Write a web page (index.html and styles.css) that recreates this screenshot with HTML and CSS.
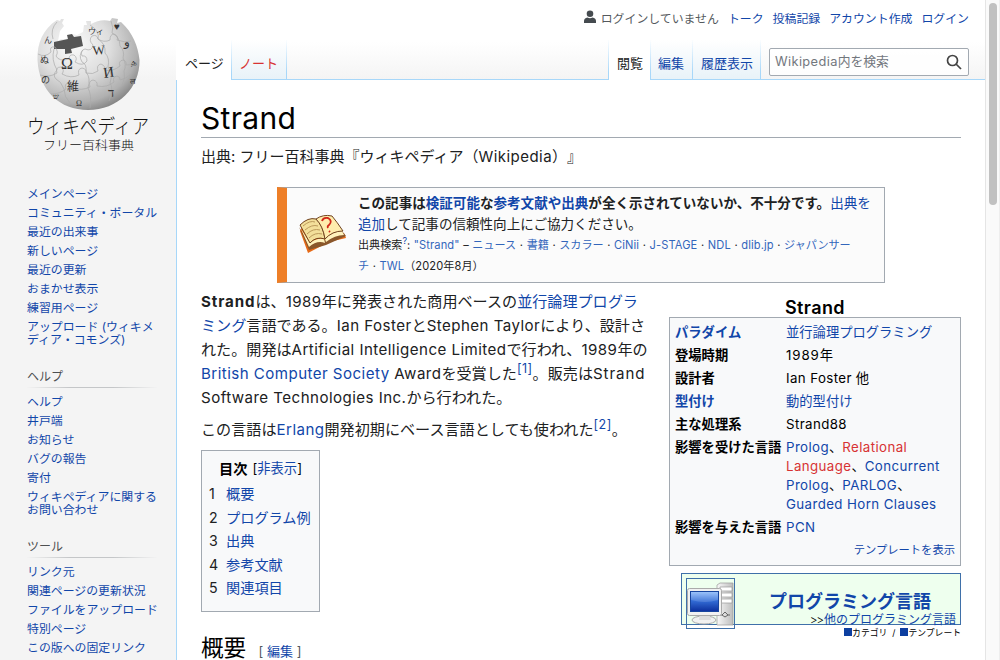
FILE: index.html
```html
<!DOCTYPE html>
<html lang="ja">
<head>
<meta charset="utf-8">
<title>Strand - Wikipedia</title>
<link rel="stylesheet" href="styles.css">
</head>
<body>
<div class="page">
  <aside class="sidebar">
    <svg class="logo" width="176" height="160" viewBox="0 0 176 160">
      <defs>
        <radialGradient id="ball" cx="0.36" cy="0.3" r="0.78">
          <stop offset="0" stop-color="#fafafa"/><stop offset="0.45" stop-color="#dedede"/>
          <stop offset="0.8" stop-color="#b0b0b0"/><stop offset="1" stop-color="#777"/>
        </radialGradient>
      </defs>
      <path fill="url(#ball)" d="M64 19 L61 19 60 21 57 20 C43 29 37 43 37.500 60 C39 91 60 110 88 110 C118 110 140 88 139.500 60 C138 46 133 33 121 22 L117 23 118 19 112 18 110 21 C103 19 97 21 91 24 L91 21 86 21 87 25 84 25 83 32 77 35 72 34 66 39 61 39 58 41 60 31 64 26 62 23Z"/>
      <path fill="#555" d="M54 42 L68 39 67 35 72 34 74 37 81 36 83 46 71 49 72 53 65 54 65 49 54 49Z"/>
      <g fill="none" stroke="#aaa" stroke-width="0.7">
        <path d="M38 54q7 4 13-2q-2-6 4-5q4 5 1 9q3 6 13 3q0-5 5-4q4 3 1 7q8 5 12-1q0-6-5-5q-2-6 3-7q7 3 8-4q-5-5-1-9q5-2 6 3q6 4 12 1q0-6 4-6q5 2 3 6q8 3 14 1"/>
        <path d="M40 75q9 3 17-2q-2-6 4-6q4 3 1 7q9 5 17 1q-2-6 3-7q5 1 4 5q7 2 12-2q-2-6 3-7q5 2 3 6q9 2 16-4q-2-5 3-6q4 1 3 5q6 1 12-4"/>
        <path d="M51 94q9 0 15-5q-2-5 2-6q5 1 4 5q10 3 18-1q-2-6 3-7q5 1 4 6q10 2 17-4q-2-5 3-6q4 1 3 4q6-1 11-6"/>
        <path d="M57 22q-7 7-4 17M54 49q-3 11 3 21q-5 5-1 9q5 2 8 10q0 8 6 14M83 50q-5 5-1 12q5 2 4 10q5 6 2 16q4 7 2 20M90 25q10 6 8 14q8 5 7 14q5 5 3 14q5 8 2 16q4 5-1 18M111 21q3 7 1 12q8 4 8 13q5 5 3 12q4 7 1 13q2 7-2 14"/>
      </g>
      <g class="glyphs">
        <text x="61" y="69" font-size="16">Ω</text><text x="93" y="55" font-size="13" transform="rotate(-5 93 55)">W</text>
        <text x="104" y="78" font-size="15" transform="rotate(-8 104 78)">И</text>
        <text x="67" y="91" font-size="12">維</text><text x="88" y="34" font-size="8">ウィ</text>
        <text x="108" y="97" font-size="13">ד</text><text x="44" y="43" font-size="8">ん</text>
        <text x="40" y="63" font-size="9">ぬ</text><text x="41" y="83" font-size="9">の</text>
        <text x="114" y="30" font-size="10">♥</text><text x="124" y="46" font-size="12">و</text>
        <text x="131" y="65" font-size="9">த</text><text x="130" y="84" font-size="8">ल</text>
        <text x="76" y="106" font-size="8">Ω</text><text x="53" y="99" font-size="8">ש</text>
      </g>
      <text class="wordmark" x="27" y="134" font-size="20" textLength="122" lengthAdjust="spacingAndGlyphs">ウィキペディア</text>
      <text class="wordmark" x="43" y="150" font-size="12.500" textLength="91" lengthAdjust="spacingAndGlyphs">フリー百科事典</text>
    </svg>
    <nav class="menu">
      <a>メインページ</a><a>コミュニティ・ポータル</a><a>最近の出来事</a><a>新しいページ</a><a>最近の更新</a><a>おまかせ表示</a><a>練習用ページ</a><a>アップロード (ウィキメ<br>ディア・コモンズ)</a>
    </nav>
    <h3>ヘルプ</h3>
    <nav class="menu">
      <a>ヘルプ</a><a>井戸端</a><a>お知らせ</a><a>バグの報告</a><a>寄付</a><a>ウィキペディアに関する<br>お問い合わせ</a>
    </nav>
    <h3 class="tools">ツール</h3>
    <nav class="menu">
      <a>リンク元</a><a>関連ページの更新状況</a><a>ファイルをアップロード</a><a>特別ページ</a><a>この版への固定リンク</a>
    </nav>
  </aside>

  <div class="main">
    <header>
      <div class="personal">
        <span class="anon"><svg width="12" height="14" viewBox="0 0 12 14"><circle cx="6" cy="3.800" r="3.300"/><path d="M0 13V11Q0 8 3.500 7.500Q6 9 8.500 7.500Q12 8 12 11V13Z"/></svg>ログインしていません</span>
        <a>トーク</a><a>投稿記録</a><a>アカウント作成</a><a>ログイン</a>
      </div>
      <div class="tabs">
        <div class="tab current first">ページ</div><div class="tab red">ノート</div>
        <div class="spacer"></div>
        <div class="tab current read">閲覧</div><div class="tab edit">編集</div><div class="tab history">履歴表示</div>
        <div class="searchwrap"><div class="search"><span><s>Wikipedia</s>内を検索</span>
          <svg width="16" height="16" viewBox="0 0 16 16" fill="none" stroke="#444" stroke-width="1.700"><circle cx="6.500" cy="6.500" r="5"/><path d="M10 10L15 15"/></svg></div></div>
      </div>
    </header>
    <main>
      <h1>Strand</h1>
      <div class="tagline">出典: フリー百科事典『ウィキペディア（<s>Wikipedia</s>）』</div>
      <div class="notice">
        <svg class="book" width="50" height="40" viewBox="0 0 50 40">
          <path fill="#e66a17" d="M2 17L10 39 31 28 48 24 46 19 4 13Z"/>
          <path fill="#8a572b" d="M1 13L11 36 28 31 48 22 44 17 29 25 11 29Z"/>
          <path fill="#fff2bd" d="M3 15L11 33Q19 26 27 29L26 25Q18 24 12 29ZM28 28Q37 21 46 21L44 17Q35 17 27 25Z"/>
          <path fill="#f3df9a" stroke="#704320" d="M2 11Q10 3 18 5Q25 11 27 25Q18 22 12 29Z"/>
          <path fill="#ffedad" stroke="#704320" d="M18 5Q25 0 34 2Q39 8 45 17Q34 17 27 25Q25 12 18 5Z"/>
          <path fill="none" stroke="#bb9a5b" d="M5 12Q12 6 17 8M7 16Q14 10 20 12M9 20Q15 14 22 16M11 24Q17 18 24 20"/>
          <path fill="none" stroke="#d22818" stroke-width="1.800" d="M24 7Q25 3 30 4Q35 7 31 11Q29 12 30 14M31 17L32 18"/>
        </svg>
        <div class="noticetext">
          <div><b>この記事は<a>検証可能</a>な<a>参考文献や出典</a>が全く示されていないか、不十分です。</b><a>出典を</a></div>
          <div><a>追加</a>して記事の信頼性向上にご協力ください。</div>
          <div class="small">出典検索<sup>?</sup>: <a><s>"Strand"</s></a> – <a>ニュース</a> · <a>書籍</a> · <a>スカラー</a> · <a><s>CiNii</s></a> · <a><s>J-STAGE</s></a> · <a><s>NDL</s></a> · <a><s>dlib.jp</s></a> · <a>ジャパンサー</a></div>
          <div class="small"><a>チ</a> · <a><s>TWL</s></a>（<s>2020</s>年<s>8</s>月）</div>
        </div>
      </div>
      <div class="columns">
        <article>
          <p><b class="subject">Strand</b>は、<s>1989</s>年に発表された商用ベースの<a>並行論理プログラ</a><br>
          <a>ミング</a>言語である。<s>Ian Foster</s>と<s>Stephen Taylor</s>により、設計さ<br>
          れた。開発は<s>Artificial Intelligence Limited</s>で行われ、<s>1989</s>年の<br>
          <a><s>British Computer Society</s></a><s> Award</s>を受賞した<sup>[1]</sup>。販売は<s class="wide">Strand</s><br>
          <s class="tight">Software Technologies Inc.</s>から行われた。</p>
          <p>この言語は<a><s>Erlang</s></a>開発初期にベース言語としても使われた<sup>[2]</sup>。</p>
          <div class="toc">
            <div class="toctitle"><b>目次</b> <small>[<a>非表示</a>]</small></div>
            <div><span>1</span><a>概要</a></div><div><span>2</span><a>プログラム例</a></div><div><span>3</span><a>出典</a></div><div><span>4</span><a>参考文献</a></div><div><span>5</span><a>関連項目</a></div>
          </div>
          <h2>概要 <span>[ <a>編集</a> ]</span></h2>
        </article>
        <div class="right">
          <div class="caption">Strand</div>
          <div class="infobox">
            <b><a>パラダイム</a></b><div><a>並行論理プログラミング</a></div>
            <b>登場時期</b><div><s class="wide">1989</s>年</div>
            <b>設計者</b><div><s>Ian Foster</s> 他</div>
            <b><a>型付け</a></b><div><a>動的型付け</a></div>
            <b>主な処理系</b><div><s>Strand88</s></div>
            <b>影響を受けた言語</b><div><a><s>Prolog</s></a>、<a class="new"><s>Relational</s></a><br><a class="new"><s>Language</s></a>、<a><s>Concurrent</s></a><br><a><s>Prolog</s></a>、<a><s>PARLOG</s></a>、<br><a><s>Guarded Horn Clauses</s></a></div>
            <b>影響を与えた言語</b><div><a><s>PCN</s></a></div>
            <div class="template"><a>テンプレートを表示</a></div>
          </div>
          <div class="portal">
            <div class="computer"><svg width="48" height="49" viewBox="0 0 48 49">
              <defs><linearGradient id="scr" x2="0" y2="1"><stop stop-color="#8dbcfb"/><stop offset=".45" stop-color="#346ed7"/><stop offset="1" stop-color="#0c2f9c"/></linearGradient>
              <linearGradient id="tower"><stop stop-color="#f8f8f8"/><stop offset="1" stop-color="#bdbdbd"/></linearGradient></defs>
              <path fill="url(#tower)" stroke="#999" stroke-width=".7" d="M30 6L33 4H46V46H30Z"/>
              <path fill="#fff" stroke="#999" stroke-width=".7" d="M33 8H45V12H33ZM33 14H45V18H33ZM33 20H45V24H33Z"/>
              <path fill="none" stroke="#666" d="M33 36H35L38 33 41 36H43M35 36L38 38 41 36"/>
              <ellipse cx="17" cy="41" rx="12" ry="4" fill="#f1f1f1" stroke="#aaa"/>
              <path fill="#ddd" d="M13 34H22L24 41H12Z"/>
              <rect x=".5" y="9.500" width="34" height="27" rx="2" fill="#f1f1f1" stroke="#aaa"/>
              <rect x="3.500" y="12.500" width="28" height="20" fill="url(#scr)" stroke="#17459e"/>
              <path fill="#fff" opacity=".15" d="M4 13H31V21Q18 25 4 21Z"/>
            </svg></div>
            <div class="portaltext"><b><a>プログラミング言語</a></b><span><i>&gt;&gt;</i><a>他のプログラミング言語</a></span></div>
          </div>
          <div class="cats"><i></i>カテゴリ<em>/</em><i></i>テンプレート</div>
        </div>
      </div>
    </main>
  </div>
  <div class="scrollbar"><div class="thumb"></div></div>
</div>
</body>
</html>
```
FILE: styles.css
```css
* { box-sizing: border-box; }
body { margin: 0; background: #f4f4f4; color: #202122; font-family: Inter, "Noto Sans CJK JP", sans-serif; overflow: hidden; text-spacing-trim: space-all; }
.page { display: flex; width: 1000px; height: 660px; overflow: hidden; background: linear-gradient(#fff 0, #fff 42px, #f4f4f4 79px); white-space: nowrap; }
a, sup { color: #1146a9; }
s { text-decoration: none; letter-spacing: .03em; }
sup { line-height: 0; }
i, em { font-style: normal; }
.sidebar { width: 176px; flex: none; font-size: 11.9px; }
.logo { display: block; }
.glyphs { font-family: "Liberation Serif", "Noto Sans CJK JP", serif; fill: #333; }
.wordmark { font-family: "Noto Sans CJK JP", sans-serif; font-weight: 300; fill: #111; }
.menu { display: flex; flex-direction: column; gap: 6px; padding-left: 27px; line-height: 13px; }
.logo + .menu { padding-top: 27px; }
.sidebar h3 { font-size: 12px; font-weight: 400; margin: 23px 0 7px 27px; width: 130px; height: 19px; line-height: 16px; color: #4d4f51; border-bottom: 1px solid; border-image: linear-gradient(to right, #ccc0, #c4c6c8 33%, #c4c6c8 66%, #ccc0) 1; }
.main { width: 809px; flex: none; display: flex; flex-direction: column; }
header { height: 80px; flex: none; }
.personal { height: 40px; display: flex; justify-content: flex-end; gap: 9px; padding: 10px 16px 0 0; font-size: 11.9px; line-height: 18px; }
.anon { display: flex; gap: 5px; color: #54595d; }
.anon svg { fill: #454b4f; }
.tabs { display: flex; height: 40px; font-size: 13px; }
.tab { border-right: 1px solid; border-bottom: 1px solid #a7d7f9; border-image: linear-gradient(#fff, #a7d7f9 80%) 1; line-height: 18px; padding: 14px 0 0 7px; color: #1146a9; background: linear-gradient(#fff, #e8f2f8); }
.tab.current { color: #202122; background: #fff; border-bottom: 0; }
.tab.first { width: 56px; padding-left: 9px; }
.tab.red { width: 55px; color: #d73333; }
.spacer { flex: 1; border-bottom: 1px solid #a7d7f9; }
.tab.read { width: 43px; padding-left: 8px; border-left: 1px solid; border-image: linear-gradient(#fff, #a7d7f9 80%) 1; }
.edit { width: 42px; }
.history { width: 68px; padding-left: 8px; }
.searchwrap { width: 224px; padding: 8px 0 0 8px; border-bottom: 1px solid #a7d7f9; }
.search { display: flex; justify-content: space-between; align-items: center; width: 200px; height: 28px; padding: 0 6px 3px 5px; border: 1px solid #a2a9b1; border-radius: 2px; background: #fffc; color: #72777d; font-size: 12.8px; }
.search svg { margin-top: 3px; }
main { flex: 1; background: #fff; border-left: 1px solid #a7d7f9; padding: 20px 24px 0; }
h1 { margin: 0; height: 38px; border-bottom: 1px solid #a2a9b1; color: #000; font-size: 30px; line-height: 37px; font-weight: 400; letter-spacing: .3px; }
.tagline { font-size: 15px; line-height: 24px; margin-top: 7px; }
.notice { width: 608px; height: 96px; margin: 18px 0 0 76px; border: 1px solid #a2a9b1; border-left: 10px solid #ee7f27; background: #fbfbfb; display: flex; }
.book { margin: 26px 10px 0 11px; flex: none; }
.noticetext { font-size: 13.56px; line-height: 21px; padding-top: 5px; }
.notice .small { font-size: 11.1px; word-spacing: .5px; }
.small s { letter-spacing: .01em; }
.small a { color: #3366bb; }
.small sup { font-size: 9px; }
.columns { display: flex; justify-content: space-between; }
article { width: 450px; padding-top: 7px; }
article p { margin: 0 0 8px; font-size: 15.1px; line-height: 24px; }
article sup { font-size: 12.5px; letter-spacing: .5px; }
.subject { letter-spacing: .9px; }
.tight { letter-spacing: .45px; }
.wide { letter-spacing: .9px; }
.toc { width: 119px; height: 162px; margin-top: 8px; padding: 5px 7px; border: 1px solid #a2a9b1; background: #f8f9fa; font-size: 14.2px; line-height: 23.5px; }
.toc div { display: flex; height: 23.5px; }
.toc div span { width: 17px; }
.toc .toctitle { justify-content: center; align-items: center; gap: 5px; height: 26px; color: #000; }
.toc small { font-size: 13.3px; }
h2 { color: #000; font-size: 22.6px; font-weight: 400; line-height: 28px; margin: 22px 0 0; }
h2 span { font-size: 13px; color: #54595d; margin-left: 6px; }
.right { width: 292px; color: #000; }
.caption { text-align: center; font-weight: 600; font-size: 18px; letter-spacing: .4px; line-height: 20px; padding-top: 15px; height: 34px; }
.infobox { height: 249px; border: 1px solid #a2a9b1; background: #f8f9fa; display: grid; grid-template-columns: 107px 1fr; column-gap: 4px; row-gap: 4px; align-content: start; padding: 5px; font-size: 13.3px; line-height: 19px; }
.new { color: #d73333; }
.template { grid-column: 1 / 3; text-align: right; font-size: 11.3px; }
.portal { margin: 7px 0 0 12px; height: 52px; border: 1px solid #3f70a9; background: #eeffee; display: flex; padding: 4px; }
.computer { width: 49px; height: 51px; border: 1px solid #3f70a9; flex: none; }
.portaltext { flex: 1; display: flex; flex-direction: column; align-items: flex-end; padding-top: 12px; }
.portaltext b { font-size: 18px; line-height: 24px; margin-right: 25px; }
.portaltext span { font-size: 12px; line-height: 12px; }
.portaltext i { letter-spacing: -1.2px; margin-right: 1px; font-weight: 300; }
.cats { display: flex; justify-content: flex-end; align-items: center; height: 14px; font-size: 8.8px; }
.cats i { width: 8px; height: 8px; background: #0d3fa0; }
.cats em { margin: 0 5px; }
.scrollbar { width: 15px; background: #fafafa; border-left: 1px solid #e5e5e5; border-right: 1px solid #eee; padding: 3px 3px 0; }
.thumb { height: 202px; width: 8px; border-radius: 4px; background: #c1c1c1; }
```
